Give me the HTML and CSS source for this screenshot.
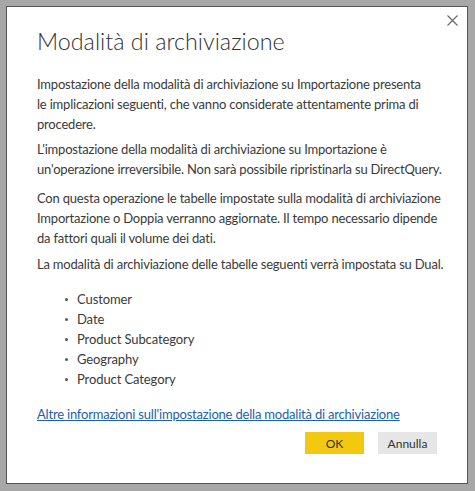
FILE: index.html
```html
<!DOCTYPE html>
<html lang="it">
<head>
<meta charset="utf-8">
<title>Modalità di archiviazione</title>
<link rel="stylesheet" href="styles.css">
</head>
<body>
<div class="dialog">
  <button class="close" aria-label="Chiudi">
    <svg width="11" height="11" viewBox="0 0 11 11"><path d="M0.5 0.5 L10.5 10.5 M10.5 0.5 L0.5 10.5" stroke="#666" stroke-width="1.1" fill="none"/></svg>
  </button>
  <h1 class="title">Modalità di archiviazione</h1>
  <p class="para p1">Impostazione della modalità di archiviazione su Importazione presenta<br>le implicazioni seguenti, che vanno considerate attentamente prima di<br>procedere.</p>
  <p class="para p2">L'impostazione della modalità di archiviazione su Importazione è<br>un'operazione irreversibile. Non sarà possibile ripristinarla su DirectQuery.</p>
  <p class="para p3">Con questa operazione le tabelle impostate sulla modalità di archiviazione<br>Importazione o Doppia verranno aggiornate. Il tempo necessario dipende<br>da fattori quali il volume dei dati.</p>
  <p class="para p4">La modalità di archiviazione delle tabelle seguenti verrà impostata su Dual.</p>
  <ul class="tables">
    <li>Customer</li>
    <li>Date</li>
    <li>Product Subcategory</li>
    <li>Geography</li>
    <li>Product Category</li>
  </ul>
  <a class="more" href="#">Altre informazioni sull'impostazione della modalità di archiviazione</a>
  <div class="actions">
    <button class="btn btn-ok">OK</button>
    <button class="btn btn-cancel">Annulla</button>
  </div>
</div>
</body>
</html>
```
FILE: styles.css
```css
html, body {
  margin: 0;
  padding: 0;
}
body {
  background: #a7a7a7;
  width: 475px;
  height: 491px;
  overflow: hidden;
  font-family: Lato, "Open Sans", sans-serif;
  color: #3a3a3a;
}
.dialog {
  position: relative;
  box-sizing: border-box;
  margin: 6px 0 0 6px;
  width: 462px;
  height: 478px;
  background: #fff;
  border: 1px solid #555;
  padding: 18px 30px 0 30px;
  display: flex;
  flex-direction: column;
}
.close {
  position: absolute;
  top: 3px;
  right: 5px;
  width: 20px;
  height: 20px;
  padding: 0;
  border: 0;
  background: transparent;
  display: flex;
  align-items: center;
  justify-content: center;
}
.title {
  margin: 0;
  font-weight: 300;
  font-size: 23.3px;
  line-height: 32px;
  color: #333;
  white-space: nowrap;
}
.para {
  margin: 0;
  font-size: 13px;
  letter-spacing: -0.2px;
  line-height: 20px;
  white-space: nowrap;
}
.p1 { margin-top: 17px; }
.p2 { margin-top: 5px; }
.p3 { margin-top: 9px; }
.p4 { margin-top: 6px; }
.tables {
  margin: 15px 0 0 0;
  padding: 0 0 0 40px;
  list-style: none;
  font-size: 13px;
  letter-spacing: -0.1px;
  line-height: 20px;
}
.tables li {
  position: relative;
}
.tables li::before {
  content: "";
  position: absolute;
  left: -12px;
  top: 9px;
  width: 3px;
  height: 3px;
  border-radius: 50%;
  background: #555;
}
.more {
  margin-top: 15px;
  font-size: 13px;
  letter-spacing: -0.2px;
  line-height: 20px;
  color: #1a5fb4;
  text-decoration: underline;
  align-self: flex-start;
  white-space: nowrap;
}
.actions {
  margin-top: 8px;
  display: flex;
  justify-content: flex-end;
  gap: 14px;
}
.btn {
  width: 59px;
  height: 22px;
  border: 0;
  padding: 0;
  font-family: Lato, "Open Sans", sans-serif;
  font-size: 12px;
  color: #333;
}
.btn-ok {
  background: #f2c811;
}
.btn-cancel {
  background: #e6e6e6;
}
```
